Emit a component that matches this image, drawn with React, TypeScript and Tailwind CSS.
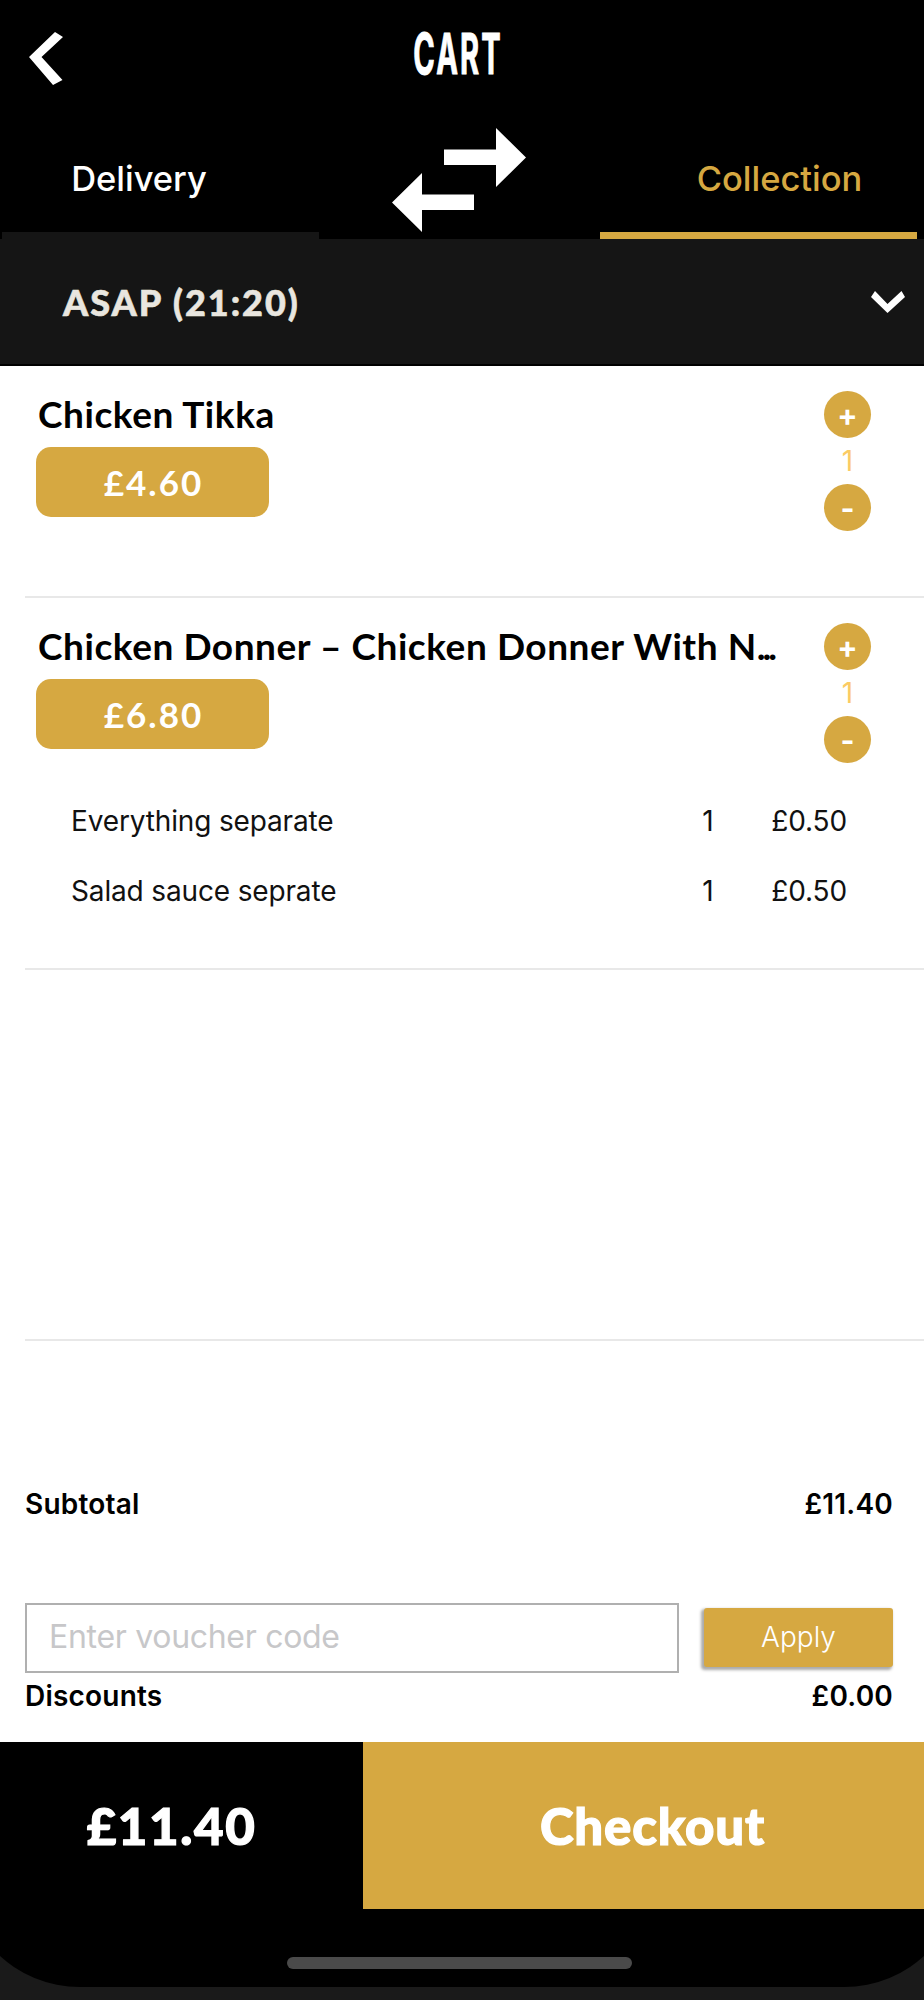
import { useState } from "react";

type Extra = { name: string; qty: number; price: string };
type Item = { name: string; cut?: boolean; price: string; qty: number; extras: Extra[] };

const items: Item[] = [
  { name: "Chicken Tikka", price: "£4.60", qty: 1, extras: [] },
  {
    name: "Chicken Donner – Chicken Donner With N",
    cut: true,
    price: "£6.80",
    qty: 1,
    extras: [
      { name: "Everything separate", qty: 1, price: "£0.50" },
      { name: "Salad sauce seprate", qty: 1, price: "£0.50" },
    ],
  },
];

export default function App() {
  const [mode, setMode] = useState("collection");
  const [voucher, setVoucher] = useState("");

  return (
    <div className="flex h-[2000px] w-[924px] flex-col overflow-hidden bg-[#1a1a1a] font-['Inter',sans-serif] text-black">
      <header className="bg-black text-white">
        <div className="grid h-[107px] grid-cols-3 items-center">
          <button className="flex pt-2.5 pl-[29px]" aria-label="Back">
            <svg width="34" height="53" viewBox="0 0 34 53" fill="white">
              <path d="M0 25 26 0l8 5-21.500 20 21 23L24 53z" />
            </svg>
          </button>
          <h1 className="-ml-2 origin-center scale-x-[.52] text-center text-[56px] leading-none font-bold tracking-[4px] [-webkit-text-stroke:1px_white]">
            CART
          </h1>
        </div>
        <div className="flex h-[132px] justify-between pr-[7px] pl-[2px] text-[34.5px] leading-none font-medium">
          <button
            onClick={() => setMode("delivery")}
            className={`flex w-[317px] items-center justify-center border-b-[7px] pt-5 pr-[43px] ${
              mode === "delivery" ? "border-[#d6a841] text-[#d6a841]" : "border-[#151515]"
            }`}
          >
            <span>Delivery</span>
          </button>
          <svg className="mt-[21px] mr-0.5" width="134" height="104" viewBox="0 0 134 104" fill="white">
            <path d="M52 21.5h52V0l30 29.500L104 59V37H52z" />
            <path d="M82 66.500H30V45L0 74.500 30 104V82h52z" />
          </svg>
          <button
            onClick={() => setMode("collection")}
            className={`flex w-[317px] items-center justify-center border-b-[7px] pt-5 pl-[42px] ${
              mode === "collection" ? "border-[#d6a841] text-[#d6a841]" : "border-[#151515]"
            }`}
          >
            <span>Collection</span>
          </button>
        </div>
      </header>

      <div className="flex h-[127px] shrink-0 items-center justify-between border-b-2 border-black bg-[#151515] pr-[19px] pl-[63px]">
        <span className="font-['Lato',sans-serif] text-[36px] leading-none font-black tracking-[2px] text-[#e9e6df] [-webkit-text-stroke:.6px_#e9e6df]">
          ASAP (21:20)
        </span>
        <svg width="34" height="22" viewBox="0 0 34 22" fill="white">
          <path d="M0 6 4 0l12.500 13L30.500 0 34 6 16.500 22z" />
        </svg>
      </div>

      <main className="flex h-[1376px] shrink-0 flex-col bg-white">
        {items.map(item => (
          <CartItem key={item.name} item={item} />
        ))}
        <div className="ml-[25px] h-[371px] shrink-0 border-b-2 border-[#e8e8e8]" />

        <div className="flex flex-1 flex-col pr-[31px] pl-[25px] text-[28px] leading-none font-semibold tracking-[.2px]">
          <div className="mt-[149px] flex h-7 items-center justify-between">
            <span>Subtotal</span>
            <span>£11.40</span>
          </div>
          <div className="mt-[85px] flex items-center gap-[25px] font-normal tracking-normal">
            <input
              value={voucher}
              onChange={e => setVoucher(e.target.value)}
              placeholder="Enter voucher code"
              className="h-[70px] w-[654px] border-2 border-[#b0b0b0] px-[22px] pb-[3px] text-[32px] tracking-[-.3px] placeholder:text-[#c7c7c9]"
            />
            <button className="mb-0.5 flex h-[59px] flex-1 items-center justify-center rounded-[3px] bg-[#d6a841] font-light text-white shadow-[-2px_2px_3px_1px_#aaaaaa]">
              <span>Apply</span>
            </button>
          </div>
          <div className="mt-[9px] flex h-7 items-center justify-between">
            <span>Discounts</span>
            <span>£0.00</span>
          </div>
        </div>
      </main>

      {/* wider than the screen so the corners are cut by its edge */}
      <footer className="-mx-[39px] h-[245px] shrink-0 rounded-b-[119px] bg-black px-[39px] font-['Lato',sans-serif] text-[51px] leading-none font-black text-white [-webkit-text-stroke:1.2px_white]">
        <div className="flex h-[167px]">
          <div className="flex w-[363px] items-center justify-center pr-5 tracking-[1.6px]">
            <span>£11.40</span>
          </div>
          <button className="flex flex-1 items-center justify-center bg-[#d6a841] pl-[18px] tracking-[.8px]">
            <span>Checkout</span>
          </button>
        </div>
        <div className="mt-[48px] ml-[287px] h-3 w-[345px] rounded-full bg-[#4a4a4a]" />
      </footer>
    </div>
  );
}

function CartItem({ item }: { item: Item }) {
  return (
    <section className="ml-[25px] shrink-0 border-b-2 border-[#e8e8e8]">
      <div className="flex h-[230px] justify-between pt-[25px] pr-[53px] pl-[11px]">
        <div className="font-['Lato',sans-serif] leading-none font-bold">
          <h2 className="flex h-[44px] items-center pl-[2px] text-[37px] tracking-[.55px] whitespace-nowrap">
            {item.name}
            {item.cut && <span className="tracking-[-3px]">...</span>}
          </h2>
          <div className="mt-[12px] flex h-[70px] w-[233px] items-center justify-center rounded-[15px] bg-[#d6a841] pl-0.5 text-[35px] tracking-[2px] text-white">
            <span>{item.price}</span>
          </div>
        </div>
        <div className="flex w-[47px] flex-col items-center text-[28px] leading-none">
          <RoundButton label="+" />
          <span className="flex h-[46px] items-center text-[#fbcb63]">{item.qty}</span>
          <RoundButton label="-" />
        </div>
      </div>
      {item.extras.length > 0 && (
        <div className="-mt-[42px] pr-[77px] pb-[42px] pl-[46px] text-[28px] leading-none tracking-[-.15px] text-[#111111]">
          {item.extras.map(extra => (
            <div key={extra.name} className="flex h-[70px] items-center">
              <span className="flex-1">{extra.name}</span>
              <span className="w-[69px]">{extra.qty}</span>
              <span>{extra.price}</span>
            </div>
          ))}
        </div>
      )}
    </section>
  );
}

function RoundButton({ label }: { label: string }) {
  return (
    <button className="flex size-[47px] items-center justify-center rounded-full bg-[#d6a841] text-[30px] font-bold text-white">
      <span>{label}</span>
    </button>
  );
}
